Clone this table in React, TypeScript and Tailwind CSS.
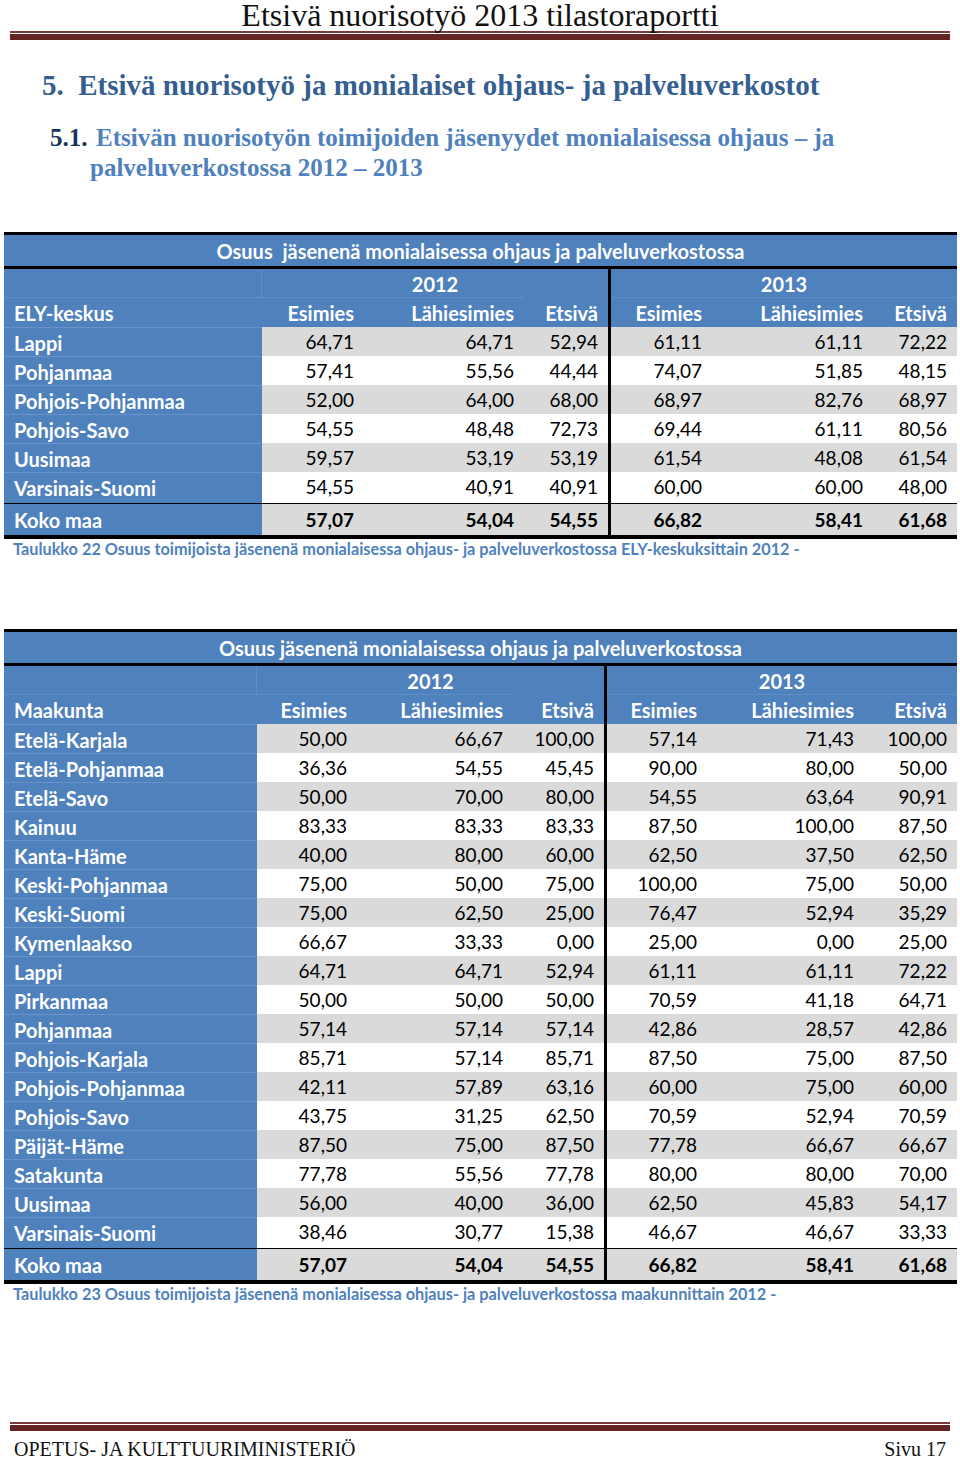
import React from 'react';

type Row = [string, string, string, string, string, string, string];

const elyRows: Row[] = [
  ['Lappi', '64,71', '64,71', '52,94', '61,11', '61,11', '72,22'],
  ['Pohjanmaa', '57,41', '55,56', '44,44', '74,07', '51,85', '48,15'],
  ['Pohjois-Pohjanmaa', '52,00', '64,00', '68,00', '68,97', '82,76', '68,97'],
  ['Pohjois-Savo', '54,55', '48,48', '72,73', '69,44', '61,11', '80,56'],
  ['Uusimaa', '59,57', '53,19', '53,19', '61,54', '48,08', '61,54'],
  ['Varsinais-Suomi', '54,55', '40,91', '40,91', '60,00', '60,00', '48,00'],
];

const maakuntaRows: Row[] = [
  ['Etelä-Karjala', '50,00', '66,67', '100,00', '57,14', '71,43', '100,00'],
  ['Etelä-Pohjanmaa', '36,36', '54,55', '45,45', '90,00', '80,00', '50,00'],
  ['Etelä-Savo', '50,00', '70,00', '80,00', '54,55', '63,64', '90,91'],
  ['Kainuu', '83,33', '83,33', '83,33', '87,50', '100,00', '87,50'],
  ['Kanta-Häme', '40,00', '80,00', '60,00', '62,50', '37,50', '62,50'],
  ['Keski-Pohjanmaa', '75,00', '50,00', '75,00', '100,00', '75,00', '50,00'],
  ['Keski-Suomi', '75,00', '62,50', '25,00', '76,47', '52,94', '35,29'],
  ['Kymenlaakso', '66,67', '33,33', '0,00', '25,00', '0,00', '25,00'],
  ['Lappi', '64,71', '64,71', '52,94', '61,11', '61,11', '72,22'],
  ['Pirkanmaa', '50,00', '50,00', '50,00', '70,59', '41,18', '64,71'],
  ['Pohjanmaa', '57,14', '57,14', '57,14', '42,86', '28,57', '42,86'],
  ['Pohjois-Karjala', '85,71', '57,14', '85,71', '87,50', '75,00', '87,50'],
  ['Pohjois-Pohjanmaa', '42,11', '57,89', '63,16', '60,00', '75,00', '60,00'],
  ['Pohjois-Savo', '43,75', '31,25', '62,50', '70,59', '52,94', '70,59'],
  ['Päijät-Häme', '87,50', '75,00', '87,50', '77,78', '66,67', '66,67'],
  ['Satakunta', '77,78', '55,56', '77,78', '80,00', '80,00', '70,00'],
  ['Uusimaa', '56,00', '40,00', '36,00', '62,50', '45,83', '54,17'],
  ['Varsinais-Suomi', '38,46', '30,77', '15,38', '46,67', '46,67', '33,33'],
];

const cell = 'flex items-center justify-end pr-[10px]';

interface TableProps {
  grid: string;
  title: string;
  labelHead: string;
  rows: Row[];
  total: Row;
}

const StatTable: React.FC<TableProps> = ({ grid, title, labelHead, rows, total }) => {
  return (
    <div className="mx-[4px] w-[953px] font-[Lato,sans-serif] text-black">
      <div className="h-[3px] bg-black" />
      <div className="flex h-[31px] items-center justify-center bg-[#4f81bd] text-[20px] font-bold text-white whitespace-pre">
        {title}
      </div>
      <div className="h-[3px] bg-black" />

      {/* year row */}
      <div className={`grid h-[28px] ${grid} bg-[#4f81bd] text-[20px] font-bold text-white`}>
        <div className="border-r border-[#5f8dc6]" />
        <div className="col-span-3 flex items-center justify-center border-r-[3px] border-black">2012</div>
        <div className="col-span-3 flex items-center justify-center">2013</div>
      </div>

      {/* column header row */}
      <div className={`grid h-[30px] ${grid} bg-[#4f81bd] text-[20px] font-bold text-white`}>
        <div className="flex items-center border-t border-[#5f8dc6] pl-[10px]">{labelHead}</div>
        <div className={`${cell} border-t border-[#5f8dc6]`}>Esimies</div>
        <div className={`${cell} border-t border-[#5f8dc6]`}>Lähiesimies</div>
        <div className={`${cell} border-r-[3px] border-black`}>Etsivä</div>
        <div className={`${cell} border-t border-[#5f8dc6]`}>Esimies</div>
        <div className={`${cell} border-t border-[#5f8dc6]`}>Lähiesimies</div>
        <div className={`${cell} border-t border-[#5f8dc6]`}>Etsivä</div>
      </div>

      {rows.map((r, i) => {
        const bg = i % 2 === 0 ? 'bg-[#dadada]' : 'bg-white';
        return (
          <div key={r[0] + i} className={`grid h-[29px] ${grid} text-[19px]`}>
            <div className="flex items-center border-t border-[#6992c8] bg-[#4f81bd] pl-[10px] text-[20px] font-bold text-white">
              {r[0]}
            </div>
            <div className={`${cell} ${bg}`}>{r[1]}</div>
            <div className={`${cell} ${bg}`}>{r[2]}</div>
            <div className={`${cell} ${bg} border-r-[3px] border-black`}>{r[3]}</div>
            <div className={`${cell} ${bg}`}>{r[4]}</div>
            <div className={`${cell} ${bg}`}>{r[5]}</div>
            <div className={`${cell} ${bg}`}>{r[6]}</div>
          </div>
        );
      })}

      <div className={`grid h-[3px] ${grid} bg-black`} />

      <div className={`grid h-[31px] ${grid} text-[19px] font-bold`}>
        <div className="flex items-start bg-[#4f81bd] pt-[1px] pl-[10px] text-[20px] text-white">{total[0]}</div>
        <div className={`${cell} bg-[#dadada] pt-[2px]`}>{total[1]}</div>
        <div className={`${cell} bg-[#dadada] pt-[2px]`}>{total[2]}</div>
        <div className={`${cell} bg-[#dadada] pt-[2px] border-r-[3px] border-black`}>{total[3]}</div>
        <div className={`${cell} bg-[#dadada] pt-[2px]`}>{total[4]}</div>
        <div className={`${cell} bg-[#dadada] pt-[2px]`}>{total[5]}</div>
        <div className={`${cell} bg-[#dadada] pt-[2px]`}>{total[6]}</div>
      </div>
      <div className="h-[4px] bg-black" />
    </div>
  );
};

const Caption: React.FC<{ text: string }> = ({ text }) => (
  <div className="flex h-[21px] items-center pl-[13px] font-[Lato,sans-serif] text-[16.3px] font-bold text-[#4f81bd]">
    {text}
  </div>
);

const DoubleRule: React.FC = () => (
  <div className="mx-[10px]">
    <div className="h-[2px] bg-[#7b3a3a]" />
    <div className="mt-[1px] h-[6px] bg-[#632423]" />
  </div>
);

const App: React.FC = () => {
  return (
    <div className="w-[960px] h-[1461px] overflow-hidden bg-white">
      {/* page header */}
      <div className="h-[31px]">
        <div className="text-center font-['Liberation_Serif',serif] text-[32px] leading-[31px] text-[#111]">
          Etsivä nuorisotyö 2013 tilastoraportti
        </div>
      </div>
      <DoubleRule />

      <h1 className="mt-[30px] pl-[42px] font-['Liberation_Serif',serif] text-[29px] leading-[30px] font-bold text-[#365f91]">
        5.&nbsp;&nbsp;Etsivä nuorisotyö ja monialaiset ohjaus- ja palveluverkostot
      </h1>

      <h2 className="mt-[23px] pl-[90px] -indent-[40px] font-['Liberation_Serif',serif] text-[25px] leading-[30px] font-bold text-[#4f81bd]">
        <span className="inline-block w-[46px] indent-0 text-[#17365d]">5.1.</span>
        Etsivän nuorisotyön toimijoiden jäsenyydet monialaisessa ohjaus – ja palveluverkostossa 2012 – 2013
      </h2>

      <div className="mt-[49px]">
        <StatTable
          grid="grid-cols-[258px_102px_160px_87px_101px_161px_84px]"
          title="Osuus  jäsenenä monialaisessa ohjaus ja palveluverkostossa"
          labelHead="ELY-keskus"
          rows={elyRows}
          total={['Koko maa', '57,07', '54,04', '54,55', '66,82', '58,41', '61,68']}
        />
      </div>
      <Caption text="Taulukko 22 Osuus toimijoista jäsenenä monialaisessa ohjaus- ja palveluverkostossa ELY-keskuksittain 2012 -" />

      <div className="mt-[69px]">
        <StatTable
          grid="grid-cols-[253px_100px_156px_94px_100px_157px_93px]"
          title="Osuus jäsenenä monialaisessa ohjaus ja palveluverkostossa"
          labelHead="Maakunta"
          rows={maakuntaRows}
          total={['Koko maa', '57,07', '54,04', '54,55', '66,82', '58,41', '61,68']}
        />
      </div>
      <Caption text="Taulukko 23 Osuus toimijoista jäsenenä monialaisessa ohjaus- ja palveluverkostossa maakunnittain 2012 -" />

      {/* page footer */}
      <div className="mt-[117px]">
        <DoubleRule />
      </div>
      <div className="mt-[7px] flex h-[22px] items-center justify-between px-[14px] font-['Liberation_Serif',serif] text-[20px] text-[#111]">
        <span>OPETUS- JA KULTTUURIMINISTERIÖ</span>
        <span>Sivu 17</span>
      </div>
    </div>
  );
};

export default App;
